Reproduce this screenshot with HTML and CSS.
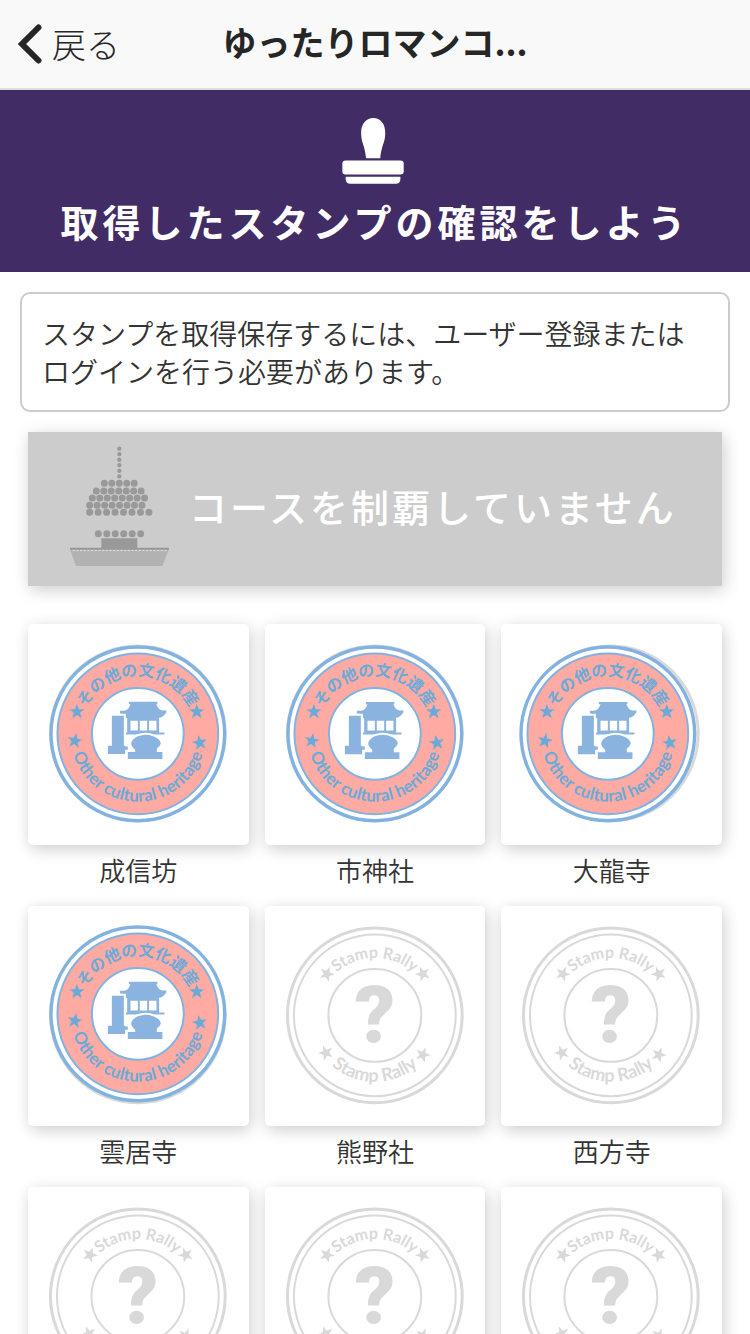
FILE: index.html
```html
<!DOCTYPE html>
<html lang="ja">
<head>
    <meta charset="UTF-8">
    <meta name="viewport" content="width=device-width, initial-scale=1.0">
    <title>スタンプラリー</title>
    <link rel="stylesheet" href="styles.css">
</head>
<body>
    <!-- Shared stamp artwork -->
    <svg class="defs" aria-hidden="true">
        <defs>
            <polygon id="star" points="0,-8 2,-2.5 7.6,-2.5 3.1,1 4.7,6.5 0,3.2 -4.7,6.5 -3.1,1 -7.6,-2.5 -2,-2.5"/>
            <path id="arcTop" d="M 52 110 A 58 58 0 0 1 168 110"/>
            <path id="arcBottom" d="M 42 110 A 68 68 0 0 0 178 110"/>
            <path id="arcBottomInner" d="M 44 110 A 66 66 0 0 0 176 110"/>

            <symbol id="stampEmpty" viewBox="0 0 221 221">
                <g class="stamp-empty">
                    <circle class="ring" cx="110" cy="109.500" r="87.5" stroke-width="3"/>
                    <circle class="ring" cx="110" cy="109.500" r="81" stroke-width="2"/>
                    <circle class="ring" cx="110" cy="109.500" r="46.5" stroke-width="2"/>
                    <text class="arc-text"><textPath href="#arcTop" startOffset="50%">Stamp Rally</textPath></text>
                    <text class="arc-text arc-text-large"><textPath href="#arcBottomInner" startOffset="50%">Stamp Rally</textPath></text>
                    <use href="#star" transform="translate(62 68) rotate(-50)"/>
                    <use href="#star" transform="translate(158 68) rotate(50)"/>
                    <use href="#star" transform="translate(61 147) rotate(50)"/>
                    <use href="#star" transform="translate(158 149) rotate(-50)"/>
                    <text class="question" x="110" y="137">?</text>
                </g>
            </symbol>

            <symbol id="stampHeritage" viewBox="0 0 221 221">
                <g class="stamp-heritage">
                    <circle class="ring" cx="110" cy="110" r="87" stroke-width="3.4"/>
                    <circle class="ring band" cx="110" cy="110" r="80.5" stroke-width="2"/>
                    <circle class="ring" cx="110" cy="110" r="46" stroke-width="2"/>
                    <text class="arc-text"><textPath href="#arcTop" startOffset="50%">その他の文化遺産</textPath></text>
                    <text class="arc-text arc-text-en"><textPath href="#arcBottom" startOffset="50%">Other cultural heritage</textPath></text>
                    <use href="#star" transform="translate(49 88)"/>
                    <use href="#star" transform="translate(169 88)"/>
                    <use href="#star" transform="translate(47 117) rotate(10)"/>
                    <use href="#star" transform="translate(172 119) rotate(-10)"/>
                    <g class="temple" transform="translate(-8 -9) scale(0.3333)">
                        <path d="M327 261h86v5l-3 2q6 17 18 19h12v5q-8 14-22 17v44h16v6H318v-6h4v-43q-14-3-22-17v-5h12q14-2 20-20h-5z"/>
                        <path class="hole" d="M332 318h22v29h-22zM360 318h22v29h-22zM388 318h22v29h-22z"/>
                        <path class="cut" d="M276 303h36v90h4v2h8v10h-8v13h-52v-25h12z"/>
                        <path class="cut" d="M334 386q2-14 20-22 26-10 50 2 18 8 19 20-2 8-12 16v10h17v21H324v-21h22v-8q-11-7-12-18z"/>
                    </g>
                </g>
            </symbol>
        </defs>
    </svg>

    <header>
        <button class="back" type="button">
            <svg viewBox="0 0 24 40" aria-hidden="true"><path d="M20.500 3.500 4 20l16.500 16.500"/></svg>
            戻る
        </button>
        <div class="title">ゆったりロマンコ...</div>
    </header>

    <main>
        <section class="hero">
            <svg viewBox="0 0 198 200" aria-hidden="true">
                <path d="M94 0c21 0 36 17 36 44 0 33-11 36-15 78H72c-4-42-15-45-15-78C57 17 73 0 94 0z"/>
                <rect y="129" width="186" height="42" rx="10"/>
                <path d="M10 178h166v6q0 15-14 15H24q-14 0-14-15z"/>
            </svg>
            <h1>取得したスタンプの確認をしよう</h1>
        </section>

        <p class="notice">スタンプを取得保存するには、ユーザー登録またはログインを行う必要があります。</p>

        <section class="banner">
            <svg viewBox="0 0 297 360" aria-hidden="true">
                <path class="spire" d="M148 8V92"/>
                <path class="dots" d="M103 112H196M79 135H216M67 156H226M59 178H236"/>
                <path class="dots wide" d="M59 199H239M85 263H213"/>
                <path class="hull" d="M0 309h297l-20 51H18z"/>
                <path class="holes" d="M8 313H290"/>
                <path class="deck" d="M94 277h108v28h95v6H0v-6h94z"/>
            </svg>
            <h2>コースを制覇していません</h2>
        </section>

        <ul class="stamps">
            <li>
                <a class="card" href="#" aria-label="成信坊">
                    <svg viewBox="0 0 221 221"><use href="#stampEmpty"/><use href="#stampHeritage"/></svg>
                </a>
                <p class="name">成信坊</p>
            </li>
            <li>
                <a class="card" href="#" aria-label="市神社">
                    <svg viewBox="0 0 221 221"><use href="#stampEmpty"/><use href="#stampHeritage"/></svg>
                </a>
                <p class="name">市神社</p>
            </li>
            <li>
                <a class="card" href="#" aria-label="大龍寺">
                    <svg viewBox="0 0 221 221"><use href="#stampEmpty"/><use href="#stampHeritage" x="-3"/></svg>
                </a>
                <p class="name">大龍寺</p>
            </li>
            <li>
                <a class="card" href="#" aria-label="雲居寺">
                    <svg viewBox="0 0 221 221"><use href="#stampEmpty"/><use href="#stampHeritage" y="-2"/></svg>
                </a>
                <p class="name">雲居寺</p>
            </li>
            <li>
                <a class="card" href="#" aria-label="熊野社">
                    <svg viewBox="0 0 221 221"><use href="#stampEmpty"/></svg>
                </a>
                <p class="name">熊野社</p>
            </li>
            <li>
                <a class="card" href="#" aria-label="西方寺">
                    <svg viewBox="0 0 221 221"><use href="#stampEmpty"/></svg>
                </a>
                <p class="name">西方寺</p>
            </li>
            <li>
                <a class="card" href="#"><svg viewBox="0 0 221 221"><use href="#stampEmpty"/></svg></a>
            </li>
            <li>
                <a class="card" href="#"><svg viewBox="0 0 221 221"><use href="#stampEmpty"/></svg></a>
            </li>
            <li>
                <a class="card" href="#"><svg viewBox="0 0 221 221"><use href="#stampEmpty"/></svg></a>
            </li>
        </ul>
    </main>
</body>
</html>
```

FILE: styles.css
```css
* {
    box-sizing: border-box;
}

body {
    margin: 0;
    height: 100vh;
    display: flex;
    flex-direction: column;
    font-family: "Noto Sans CJK JP", sans-serif;
    font-weight: 350;
    color: #333;
    background-color: #fff;
}

h1, h2, p, ul {
    margin: 0;
    padding: 0;
}

.defs {
    position: absolute;
    width: 0;
    height: 0;
}

/* Header */
header {
    flex: none;
    display: grid;
    grid-template-columns: 1fr auto 1fr;
    align-items: center;
    height: 90px;
    padding: 0 18px;
    background-color: #f9f9f9;
    border-bottom: 2px solid #ddd;
    color: #262626;
}

.back {
    display: flex;
    align-items: center;
    justify-self: start;
    gap: 10px;
    padding: 0;
    border: none;
    background: none;
    color: inherit;
    font-family: inherit;
    font-size: 34px;
    font-weight: 300;
    line-height: 40px;
    cursor: pointer;
}

.back svg {
    width: 24px;
    height: 40px;
    fill: none;
    stroke: #262626;
    stroke-width: 6;
    stroke-linecap: round;
}

.title {
    padding-bottom: 4px;
    font-size: 34px;
    font-weight: bold;
    line-height: 40px;
}

/* Content */
main {
    flex: 1;
    min-height: 0;
    overflow-y: auto;
    scrollbar-width: none;
}

.hero {
    padding: 28px 0 24px;
    background-color: #412c65;
    color: #fff;
    text-align: center;
}

.hero svg {
    display: block;
    width: 66px;
    height: 66px;
    margin: 0 auto 10px;
    fill: #fff;
}

.hero h1 {
    font-size: 38px;
    font-weight: bold;
    line-height: 54px;
    letter-spacing: 4px;
}

.notice {
    margin: 20px;
    padding: 20px;
    border: 2px solid #ccc;
    border-radius: 10px;
    font-size: 28px;
    line-height: 38px;
}

.banner {
    display: flex;
    align-items: center;
    gap: 20px;
    margin: 0 28px 38px;
    padding: 14px 42px 20px;
    background-color: #ccc;
    color: #fff;
    box-shadow: 2px 4px 16px rgba(0, 0, 0, 0.2);
}

.banner svg {
    flex: none;
    width: 99px;
    height: 120px;
    fill: none;
    stroke: #999;
    stroke-linecap: round;
}

.banner .spire {
    stroke-width: 13;
    stroke-dasharray: 0 16.6;
}

.banner .dots {
    stroke-width: 21;
    stroke-dasharray: 0 22.400;
}

.banner .wide {
    stroke-dasharray: 0 25.400;
}

.banner .hull {
    fill: #b2b2b2;
    stroke: none;
}

.banner .holes {
    stroke: #ddd;
    stroke-width: 4;
    stroke-linecap: butt;
    stroke-dasharray: 7 4;
}

.banner .deck {
    fill: #999;
    stroke: none;
}

.banner h2 {
    font-size: 38px;
    font-weight: 500;
    line-height: 48px;
    letter-spacing: 3px;
    white-space: nowrap;
}

/* Stamps */
.stamps {
    display: grid;
    grid-template-columns: repeat(3, 1fr);
    gap: 17px 16px;
    padding: 0 28px 28px;
    list-style: none;
}

.card {
    display: block;
    background-color: #fff;
    border-radius: 5px;
    box-shadow: 2px 4px 16px rgba(0, 0, 0, 0.2);
}

.card svg {
    display: block;
    width: 100%;
}

.name {
    margin-top: 6px;
    font-size: 26px;
    line-height: 38px;
    text-align: center;
}

.ring {
    fill: #fff;
}

.arc-text {
    font-family: Lato, "Noto Sans CJK JP", sans-serif;
    font-size: 16px;
    font-weight: bold;
    text-anchor: middle;
}

.arc-text-en {
    font-size: 17px;
}

.arc-text-large {
    font-size: 18px;
}

.stamp-empty {
    fill: #d9d9d9;
}

.stamp-empty .ring {
    stroke: #d9d9d9;
}

.question {
    font-family: Roboto, sans-serif;
    font-size: 80px;
    font-weight: 900;
    text-anchor: middle;
}

.stamp-heritage {
    fill: #6aaad8;
}

.stamp-heritage .ring {
    stroke: #82b2e0;
}

.stamp-heritage .band {
    fill: #ffaba3;
}

.temple {
    fill: #8ab4df;
}

.temple .hole {
    fill: #fff;
}

.temple .cut {
    stroke: #fff;
    stroke-width: 12;
    paint-order: stroke;
}
```
